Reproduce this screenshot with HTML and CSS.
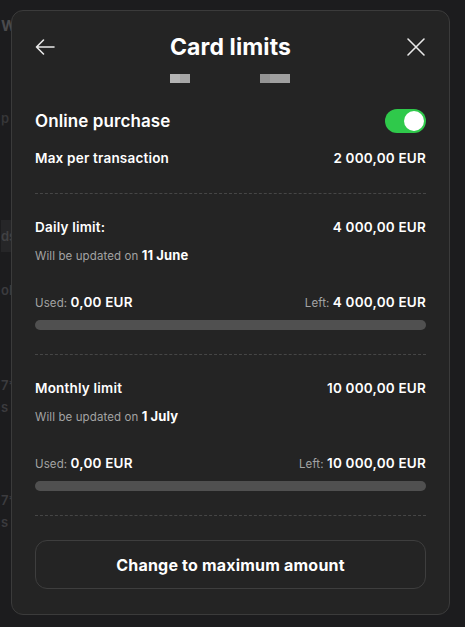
FILE: index.html
```html
<!DOCTYPE html>
<html lang="en">
<head>
  <meta charset="UTF-8" />
  <title>Card limits</title>
  <link rel="stylesheet" href="styles.css">
</head>
<body>
  <!-- page behind the sheet -->
  <div class="bg-page">
    <div class="bg-row bg-w">W</div>
    <div class="bg-row bg-p">p</div>
    <div class="bg-row bg-ds">ds</div>
    <div class="bg-row bg-ols">ols</div>
    <div class="bg-row bg-7">7*</div>
    <div class="bg-row bg-s">s</div>
    <div class="bg-row bg-7b">7*</div>
    <div class="bg-row bg-s">s</div>
  </div>

  <div class="modal">
    <div class="modal-head">
      <svg class="icon" width="24" height="24" viewBox="0 0 24 24" fill="none" stroke="currentColor" stroke-width="1.6" stroke-linecap="round" stroke-linejoin="round">
        <path d="M21 12H3.5M10.5 5l-7 7 7 7"/>
      </svg>
      <h1>Card limits</h1>
      <svg class="icon" width="24" height="24" viewBox="0 0 24 24" fill="none" stroke="currentColor" stroke-width="1.6" stroke-linecap="round">
        <path d="M4 4l16 16M20 4L4 20"/>
      </svg>
    </div>

    <div class="card-mask">
      <span class="blur blur-a"></span>
      <span class="blur blur-b"></span>
    </div>

    <div class="row toggle-row">
      <span class="label-lg">Online purchase</span>
      <span class="toggle"><span class="knob"></span></span>
    </div>

    <div class="row">
      <span class="label">Max per transaction</span>
      <span class="label">2 000,00 EUR</span>
    </div>
    <div class="divider first"></div>

    <div class="limit">
      <div class="row">
        <span class="label">Daily limit:</span>
        <span class="label">4 000,00 EUR</span>
      </div>
      <div class="note">Will be updated on <b>11 June</b></div>
      <div class="row usage">
        <span class="muted">Used: <b>0,00 EUR</b></span>
        <span class="muted">Left: <b>4 000,00 EUR</b></span>
      </div>
      <div class="bar"><div class="bar-fill" style="width:0%"></div></div>
    </div>
    <div class="divider"></div>

    <div class="limit">
      <div class="row">
        <span class="label">Monthly limit</span>
        <span class="label">10 000,00 EUR</span>
      </div>
      <div class="note">Will be updated on <b>1 July</b></div>
      <div class="row usage">
        <span class="muted">Used: <b>0,00 EUR</b></span>
        <span class="muted">Left: <b>10 000,00 EUR</b></span>
      </div>
      <div class="bar"><div class="bar-fill" style="width:0%"></div></div>
    </div>
    <div class="divider"></div>

    <button class="btn-max">Change to maximum amount</button>
  </div>
</body>
</html>
```

FILE: styles.css
```css
*{margin:0;padding:0;box-sizing:border-box}
html,body{height:100%}
body{
  font-family:'Inter','Liberation Sans',Arial,sans-serif;
  background:#1c1c1e;
  color:#fff;
  overflow:hidden;
}

/* page behind */
.bg-page{display:flex;flex-direction:column;padding-top:18px;padding-left:1px}
.bg-row{white-space:nowrap;color:#3b3b3e;font-size:13px;font-weight:600;height:16px;line-height:16px}
.bg-w{color:#4a4a4c;font-weight:700;font-size:15px}
.bg-p{margin-top:76px;color:#363638}
.bg-ds{margin-top:94px;background:#262628;height:32px;line-height:32px;color:#414143;width:12px}
.bg-ols{margin-top:30px}
.bg-7{margin-top:79px}
.bg-7b{margin-top:77px}
.bg-s{margin-top:6px}

/* sheet */
.modal{
  position:absolute;top:10px;left:11px;
  width:439px;height:605px;
  background:#242424;
  border:1px solid #3b3b3b;
  border-radius:12px;
  padding:0 23px;
}
.modal-head{display:flex;align-items:center;justify-content:space-between;height:32px;margin-top:20px}
.modal-head h1{font-size:23px;font-weight:700;letter-spacing:.1px}
.icon{color:#e8e8e8;display:block}
.modal-head .icon:first-child{margin-left:-2px}
.modal-head .icon:last-child{margin-right:-2px}

.card-mask{display:flex;justify-content:center;gap:70px;margin-top:11px;margin-left:-1px}
.blur{display:block;height:9px}
.blur-a{width:20px;background:linear-gradient(90deg,#b4b4b4 50%,#a6a6a6 50%)}
.blur-b{width:30px;background:linear-gradient(90deg,#939393 33%,#a0a0a0 33%)}

.row{display:flex;justify-content:space-between;align-items:center;height:18px}
.toggle-row{height:24px;margin-top:26px;margin-bottom:16px}
.label-lg{font-size:17px;font-weight:600;letter-spacing:.1px}
.label{font-size:13.5px;font-weight:600;letter-spacing:.2px}

.toggle{width:41px;height:24px;border-radius:12px;background:#2fc94b;position:relative;display:block}
.knob{position:absolute;right:2px;top:2px;width:20px;height:20px;border-radius:50%;background:#fff}

.divider{border-top:1px dashed #464646;margin-top:24px}
.divider.first{margin-top:26px}

.limit{padding-top:24px}
.note{font-size:11.5px;color:#a3a3a3;margin-top:11px;line-height:16px;letter-spacing:.1px}
.note b{color:#fff;font-size:13px;font-weight:700}
.usage{margin-top:29px}
.muted{font-size:11.5px;color:#a3a3a3;letter-spacing:.1px}
.muted b{color:#fff;font-size:13.5px;font-weight:600;letter-spacing:.2px}

.bar{height:10px;border-radius:5px;background:#505050;margin-top:9px;overflow:hidden}
.bar-fill{height:100%;background:#2fc94b}

.btn-max{
  display:block;width:100%;height:49px;margin-top:24px;
  background:transparent;border:1px solid #3e3e3e;border-radius:12px;
  color:#fff;font-family:inherit;font-size:16px;font-weight:700;letter-spacing:.2px;
}
```
